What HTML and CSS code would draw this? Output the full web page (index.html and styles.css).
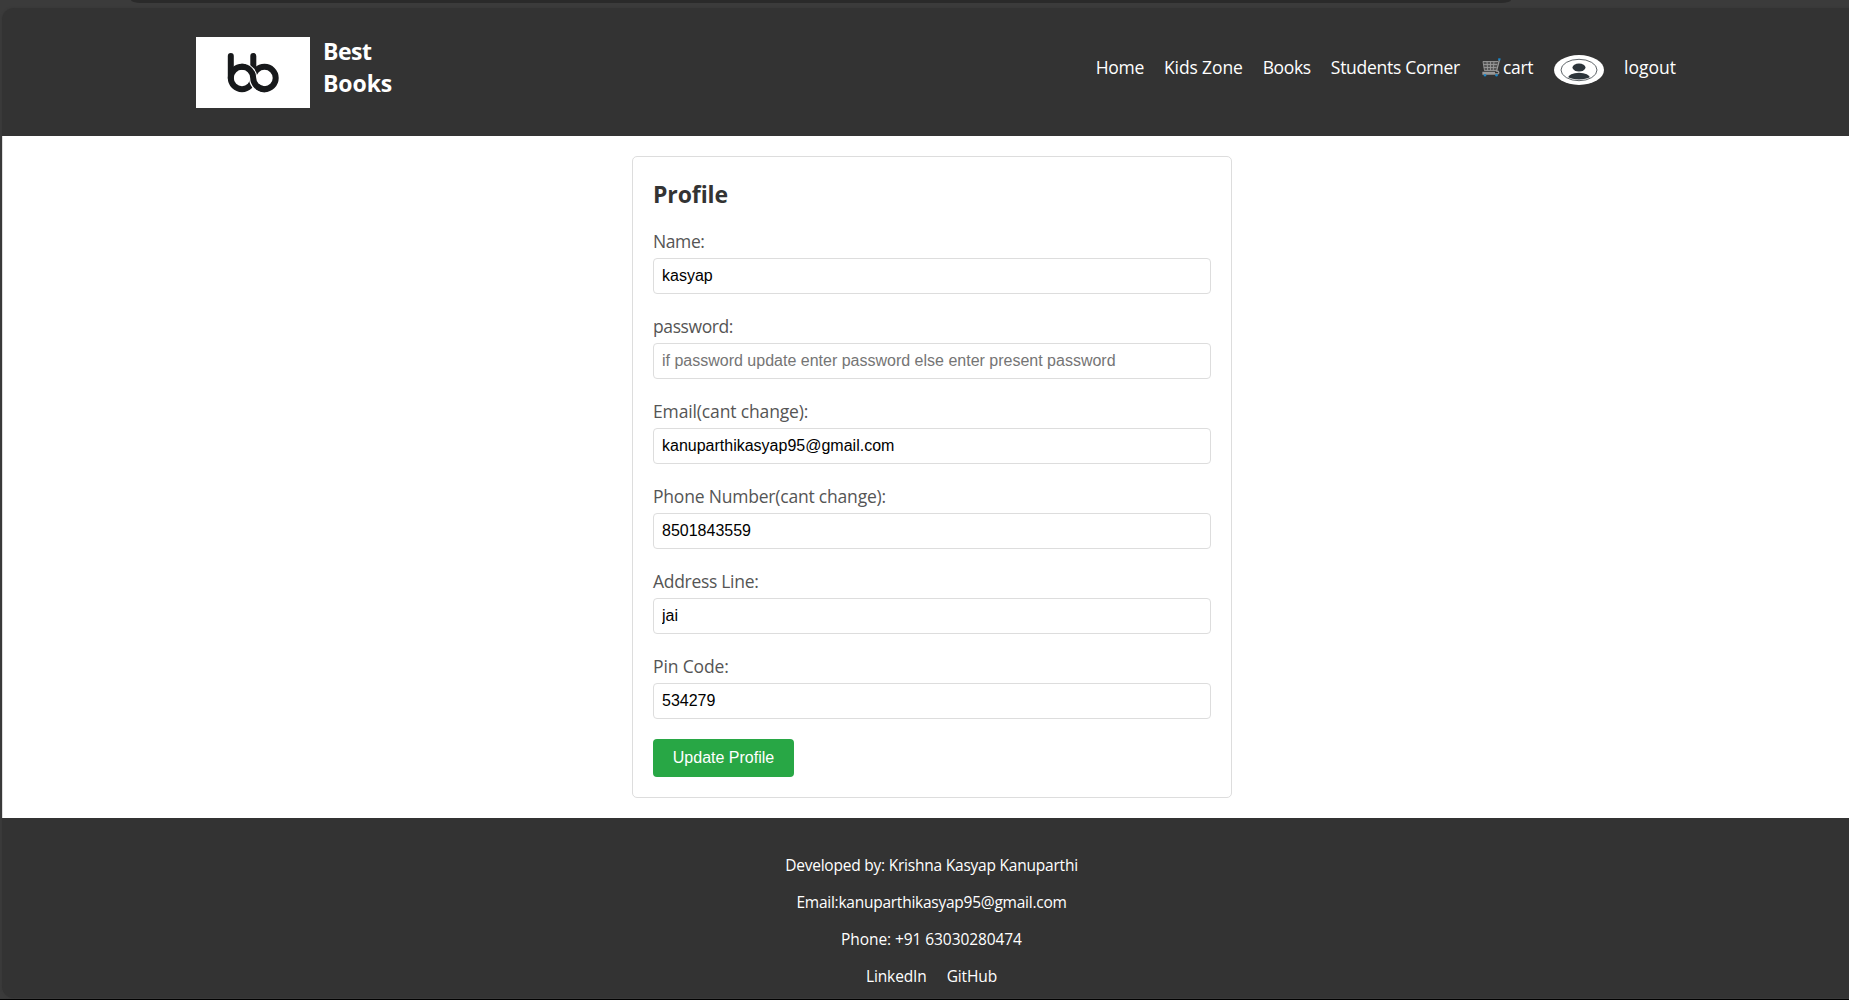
FILE: index.html
```html
<!DOCTYPE html>
<html lang="en">
<head>
<meta charset="utf-8">
<title>Best Books - Profile</title>
<link rel="stylesheet" href="styles.css">
</head>
<body>
<div class="toolbar"><div class="tab-strip"></div></div>
<div class="page">
  <header class="header">
    <div class="brand">
      <svg class="logo" viewBox="0 0 114 71" aria-hidden="true">
        <rect width="114" height="71" fill="#fff"/>
        <g fill="none" stroke="#17191b" stroke-width="6" stroke-linecap="round">
          <path d="M34.800 19V41M57.300 19V33"/>
          <circle cx="46" cy="41" r="11.200"/>
          <circle cx="68.500" cy="41" r="11.200"/>
          <path d="M49 30.200A11.200 11.200 0 0 1 57.200 41A11.300 11.300 0 0 0 61.500 49.800" stroke="#fff" stroke-width="8.400" stroke-linecap="butt"/>
          <path d="M46 29.800A11.200 11.200 0 0 1 57.200 41A11.300 11.300 0 0 0 68.500 52.200"/>
        </g>
      </svg>
      <h1 class="brand-name"><span class="best">Best</span><span class="books">Books</span></h1>
    </div>
    <nav class="nav">
      <a class="nav-home">Home</a>
      <a class="nav-kids">Kids Zone</a>
      <a class="nav-books">Books</a>
      <a class="nav-students">Students Corner</a>
      <a class="nav-cart">
        <svg class="cart-icon" viewBox="0 0 20 20" fill="none" aria-hidden="true">
          <path d="M2 4.500H17L15 13.500H3.500Z" fill="#555"/>
          <path d="M2 4.500H17M2.300 7.500H16.300M2.800 10.500H15.600M3.300 13.500H15M2 4.500L3.500 13.500M6 4.500L6.700 13.500M9.500 4.500V13.500M13 4.500L12.200 13.500" stroke="#999" stroke-width="0.900"/>
          <path d="M18.500 2.500L15.500 14C18.500 14 18.500 17 16 17H2V15.500H14" stroke="#999" stroke-width="1.300"/>
          <path d="M17.200 2.300H19.500" stroke="#1b87c9" stroke-width="2"/>
          <circle cx="4" cy="18.300" r="1.200" fill="#1b87c9"/>
          <circle cx="15.500" cy="18.300" r="1.200" fill="#1b87c9"/>
        </svg>
        <span>cart</span>
      </a>
      <svg class="avatar" viewBox="0 0 50 30" aria-hidden="true">
        <defs><clipPath id="face"><ellipse cx="25" cy="15" rx="16.500" ry="9.500"/></clipPath></defs>
        <ellipse cx="25" cy="15" rx="25" ry="15" fill="#fff"/>
        <ellipse cx="25" cy="15" rx="18" ry="10.700" fill="none" stroke="#60666a" stroke-width="1"/>
        <g fill="#2d353b" clip-path="url(#face)">
          <ellipse cx="25" cy="12.500" rx="6.500" ry="4"/>
          <ellipse cx="25" cy="23" rx="11" ry="5.300"/>
        </g>
      </svg>
      <a class="nav-logout">logout</a>
    </nav>
  </header>
  <main class="main">
    <form class="card">
      <h2 class="card-title">Profile</h2>
      <label class="label tight" for="name">Name:</label>
      <input class="input" id="name" type="text" value="kasyap">
      <label class="label tight" for="password">password:</label>
      <input class="input" id="password" type="password" placeholder="if password update enter password else enter present password">
      <label class="label loose" for="email">Email(cant change):</label>
      <input class="input" id="email" type="text" value="kanuparthikasyap95@gmail.com">
      <label class="label" for="phone">Phone Number(cant change):</label>
      <input class="input" id="phone" type="text" value="8501843559">
      <label class="label medium" for="address">Address Line:</label>
      <input class="input" id="address" type="text" value="jai">
      <label class="label loose" for="pin">Pin Code:</label>
      <input class="input" id="pin" type="text" value="534279">
      <button class="button" type="button">Update Profile</button>
    </form>
  </main>
  <footer class="footer">
    <p>Developed by: Krishna Kasyap Kanuparthi</p>
    <p class="footer-email">Email:kanuparthikasyap95@gmail.com</p>
    <p class="footer-phone">Phone: +91 63030280474</p>
    <p class="footer-links"><a>LinkedIn</a><a>GitHub</a></p>
  </footer>
</div>
</body>
</html>
```
FILE: styles.css
```css
* { box-sizing: border-box; }

body {
  margin: 0;
  height: 1000px;
  overflow: hidden;
  background: #3b3b3b;
  border-bottom: 1px solid #000;
  font-family: "Segoe UI", "Open Sans", sans-serif;
  color: #fff;
}

.toolbar { height: 8px; padding: 0 338px 0 131px; }
.tab-strip { height: 3px; background: #2a2a2a; border-radius: 0 0 10px 10px / 0 0 3px 3px; }

/* The page runs slightly past the right edge of the window. */
.page {
  height: 990px;
  margin: 0 -12px 0 2px;
  background: #333;
  border-radius: 12px 0 0 12px;
  box-shadow: 0 0 2px #353535;
}

.header {
  height: 128px;
  padding: 27px 185px 0 194px;
  display: flex;
  justify-content: space-between;
  align-items: flex-start;
}

.brand { display: flex; gap: 13px; padding-top: 2px; }
.logo { width: 114px; height: 71px; }
.brand-name {
  display: flex;
  flex-direction: column;
  margin: -2px 0 0;
  font-size: 23px;
  line-height: 32px;
  font-weight: 700;
}
.best { letter-spacing: -0.5px; }
.books { letter-spacing: -0.1px; }

.nav {
  display: flex;
  gap: 20px;
  padding-top: 20px;
  font-size: 17.5px;
  line-height: 24px;
  white-space: nowrap;
}
.nav-home { width: 48.4px; letter-spacing: -0.27px; }
.nav-kids { width: 78.6px; letter-spacing: -0.13px; }
.nav-books { width: 48.2px; letter-spacing: -0.34px; }
.nav-students { width: 129.2px; letter-spacing: -0.28px; }
.nav-cart { width: 54px; display: flex; gap: 2px; letter-spacing: -0.3px; }
.cart-icon { width: 20px; height: 20px; margin: 2px 0 0 1px; }
.avatar { width: 50px; height: 30px; }
.nav-logout { width: 52px; }

.main {
  height: 682px;
  padding-top: 20px;
  background: #fff;
  border-left: 1px solid #ddd;
}

.card {
  width: 600px;
  height: 642px;
  margin: 0 auto;
  padding: 20px;
  border: 1px solid #ddd;
  border-radius: 5px;
}
.card-title {
  margin: 0 0 20px;
  padding-top: 1px;
  height: 32px;
  font-size: 23px;
  line-height: 32px;
  letter-spacing: -0.1px;
  color: #333;
}
.label {
  display: block;
  margin-bottom: 5px;
  font-size: 17.5px;
  line-height: 24px;
  letter-spacing: -0.2px;
  color: #555;
}
.tight { letter-spacing: -0.4px; }
.medium { letter-spacing: -0.3px; }
.loose { letter-spacing: -0.14px; }
.input {
  display: block;
  width: 100%;
  height: 36px;
  margin: 0 0 20px;
  padding: 8px;
  border: 1px solid #ddd;
  border-radius: 4px;
  background: #fff;
  font: 16px Arial, "Liberation Sans", sans-serif;
  color: #000;
}
.input::placeholder { color: #757575; }
.button {
  display: block;
  width: 141px;
  height: 38px;
  padding: 0;
  border: 0;
  border-radius: 4px;
  background: #28a745;
  color: #fff;
  font: 16px Arial, "Liberation Sans", sans-serif;
}

.footer {
  padding-top: 37px;
  text-align: center;
  font-size: 15.5px;
  line-height: 21px;
  letter-spacing: -0.22px;
}
.footer p { margin: 0 0 16px; }
.footer .footer-email { letter-spacing: -0.25px; }
.footer-phone { letter-spacing: -0.08px; }
.footer-links { display: flex; justify-content: center; gap: 20px; letter-spacing: -0.13px; }
```
